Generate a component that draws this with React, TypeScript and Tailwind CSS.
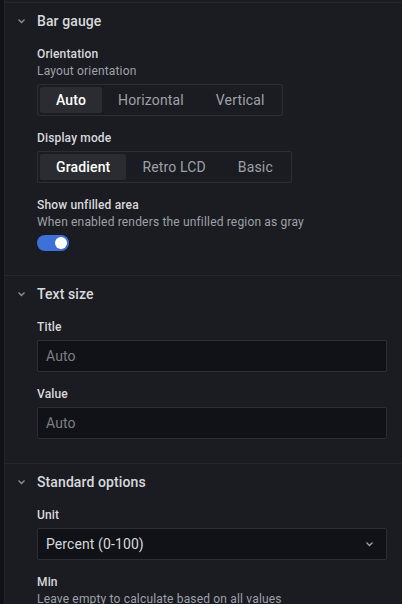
import React from 'react';

const font = { fontFamily: 'Roboto, "Liberation Sans", sans-serif' };

const Chevron = ({ className = '' }: { className?: string }) => (
  <svg width="9" height="6" viewBox="0 0 9 6" className={className}>
    <path d="M1.5 1.5l3 3 3-3" stroke="currentColor" strokeWidth="1.3" fill="none" />
  </svg>
);

interface SectionProps {
  title: string;
  children: React.ReactNode;
}

const Section = ({ title, children }: SectionProps) => (
  <div className="border-t border-[#25272d]">
    <div className="h-[36px] flex items-center pl-[12px]">
      <Chevron className="text-[#8e9097]" />
      <span className="ml-[11px] text-sm font-medium tracking-[0.1px] text-[#d8d9dc]">{title}</span>
    </div>
    <div className="pl-[32px] pr-[15px] pt-[7px] pb-[10px]">{children}</div>
  </div>
);

const Field = ({
  label,
  description,
  children,
}: {
  label: string;
  description?: string;
  children?: React.ReactNode;
}) => (
  <div className="mb-[14px]">
    <div className="text-xs font-medium leading-[17px] tracking-[0.15px] text-[#d8d9dc]">{label}</div>
    {description && (
      <div className="text-xs leading-4 tracking-[0.17px] text-[#9ea1a8]">{description}</div>
    )}
    {children && <div className={description ? 'mt-[5px]' : 'mt-[4px]'}>{children}</div>}
  </div>
);

const RadioGroup = ({ options, active }: { options: string[]; active: string }) => (
  <div className="inline-flex h-[32px] p-[2px] border border-[#2c2e34] rounded-[2px]">
    {options.map((o) => (
      <div
        key={o}
        className={
          o === active
            ? 'h-[26px] px-4 flex items-center text-sm font-medium tracking-[0.15px] text-white bg-[#2a2c31] rounded-[2px]'
            : 'h-[26px] px-4 flex items-center text-sm tracking-[0.15px] text-[#9ea1a8]'
        }
      >
        {o}
      </div>
    ))}
  </div>
);

const Input = ({ placeholder }: { placeholder: string }) => (
  <div className="h-[32px] flex items-center px-[8px] bg-[#111217] border border-[#2c2e34] rounded-[2px] text-sm tracking-[0.1px] text-[#7b7e85]">
    {placeholder}
  </div>
);

export default function App() {
  return (
    <div className="w-[402px] h-[604px] overflow-hidden flex bg-[#111217]" style={font}>
      <div className="w-[4px] shrink-0" />
      <div className="flex-1 border-l border-[#202227] bg-[#1a1c21] pt-[2px]">
        <Section title="Bar gauge">
          <Field label="Orientation" description="Layout orientation">
            <RadioGroup options={['Auto', 'Horizontal', 'Vertical']} active="Auto" />
          </Field>
          <Field label="Display mode">
            <RadioGroup options={['Gradient', 'Retro LCD', 'Basic']} active="Gradient" />
          </Field>
          <Field
            label="Show unfilled area"
            description="When enabled renders the unfilled region as gray"
          >
            <div className="w-[32px] h-[16px] rounded-full bg-[#3d71d9] flex items-center justify-end pr-[2px]">
              <div className="w-[12px] h-[12px] rounded-full bg-white" />
            </div>
          </Field>
        </Section>
        <Section title="Text size">
          <Field label="Title">
            <Input placeholder="Auto" />
          </Field>
          <Field label="Value">
            <Input placeholder="Auto" />
          </Field>
        </Section>
        <Section title="Standard options">
          <Field label="Unit">
            <div className="h-[32px] flex items-center justify-between pl-[8px] pr-[12px] bg-[#111217] border border-[#2c2e34] rounded-[2px] text-sm tracking-[0.1px] text-[#d8d9dc]">
              <span>Percent (0-100)</span>
              <Chevron className="text-[#9ea1a8]" />
            </div>
          </Field>
          <Field label="Min" description="Leave empty to calculate based on all values" />
        </Section>
      </div>
    </div>
  );
}
